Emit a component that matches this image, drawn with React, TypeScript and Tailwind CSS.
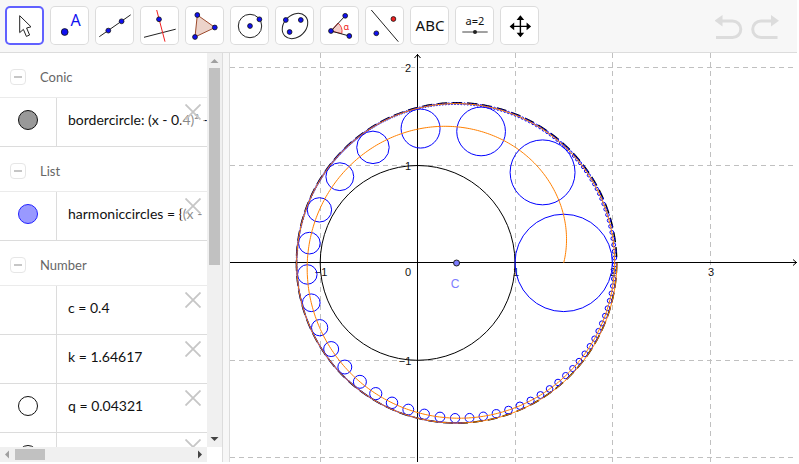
import React from 'react';

interface Circle {
    cx: number;
    cy: number;
    r: number;
}

interface RowProps {
    text: string;
    marble?: 'gray' | 'blue' | 'empty';
}

interface SectionProps {
    title: string;
    children: React.ReactNode;
}

interface ToolProps {
    label: string;
    active?: boolean;
    children: React.ReactNode;
}

const UNIT = 97.4;
const OX = 187.6;
const OY = 209.9;
const C = 0.4;
const K = 1.64617;

const spiralPoint = (theta: number) => {
    const rho = K - (K - 1.5 + C) * Math.exp(-theta / 2);
    return {
        x: OX + UNIT * (C + rho * Math.cos(theta)),
        y: OY - UNIT * rho * Math.sin(theta),
    };
};

// circle n has radius 1/n and sits on the spiral at angle 2 ln(n / 2)
const harmonicCircles: Circle[] = [];
for (let n = 2; n <= 500; n++) {
    const p = spiralPoint(2 * Math.log(n / 2));
    harmonicCircles.push({ cx: p.x, cy: p.y, r: UNIT / n });
}

const spiral = Array.from({ length: 801 }, (_, i) => {
    const p = spiralPoint((i / 800) * 4 * Math.PI);
    return `${p.x.toFixed(2)},${p.y.toFixed(2)}`;
}).join(' ');

const Dot: React.FC<{ x: number; y: number; r?: number; red?: boolean }> = ({ x, y, r = 2.4, red }) => (
    <circle cx={x} cy={y} r={r} fill={red ? '#f02020' : '#1010f0'} stroke="#111" strokeWidth="0.8" />
);

const Tool: React.FC<ToolProps> = ({ label, active, children }) => (
    <button
        type="button"
        aria-label={label}
        className={
            active
                ? 'size-[39px] shrink-0 rounded-[5px] bg-white ring-2 ring-inset ring-[#6161ff]'
                : 'size-[39px] shrink-0 rounded-[5px] bg-white ring-1 ring-inset ring-[#dcdcdc]'
        }
    >
        <svg className="block size-full" viewBox="0 0 39 39" fill="none" stroke="#222" strokeWidth="1">
            {children}
        </svg>
    </button>
);

const Toolbar: React.FC = () => (
    <header className="flex h-[53px] shrink-0 items-start gap-1.5 border-b border-[#dcdcdc] bg-[#f7f7f7] pt-1.5 pr-[18px] pl-[5px]">
        <Tool label="Move" active>
            <path d="M14.7 9.7V26.6L18.4 23.4L21.4 30.4L24.6 29L21.6 22L26 20.8Z" fill="#fff" />
        </Tool>
        <Tool label="Point">
            <Dot x={14.7} y={26} r={3.4} />
            <text x="25.5" y="20" textAnchor="middle" fill="#1010f0" stroke="none" className="font-['Noto_Sans',sans-serif] text-[16px]">A</text>
        </Tool>
        <Tool label="Line">
            <path d="M4.3 30.7L35.7 8.8" />
            <Dot x={13.3} y={24.6} />
            <Dot x={26.6} y={15.3} />
        </Tool>
        <Tool label="Perpendicular Line">
            <path d="M4 31.3L35.7 23.2" />
            <path d="M16.7 4L25 35.7" stroke="#f02020" />
            <Dot x={19} y={13.3} />
        </Tool>
        <Tool label="Polygon">
            <path d="M12.3 9L30 21.5L10 31Z" fill="#ecd3ca" stroke="#9c4a2c" />
            <Dot x={12.3} y={9} />
            <Dot x={29.8} y={21.5} />
            <Dot x={10} y={31} />
        </Tool>
        <Tool label="Circle with Center through Point">
            <circle cx="20" cy="20" r="11.7" />
            <Dot x={20} y={20} />
            <Dot x={29.4} y={13.3} />
        </Tool>
        <Tool label="Ellipse">
            <ellipse cx="20" cy="20" rx="14.2" ry="11" transform="rotate(-44 20 20)" />
            <Dot x={10.8} y={14} />
            <Dot x={25.8} y={14} />
            <Dot x={14.6} y={26} />
        </Tool>
        <Tool label="Angle">
            <path d="M11 25L18 17A11 11 0 0 1 21.8 27.6Z" fill="#f6cfca" stroke="#f04040" />
            <path d="M25.2 9.8L11 25L29.3 30" />
            <Dot x={25.2} y={9.8} />
            <Dot x={11} y={25} />
            <Dot x={29.3} y={30} />
            <text x="26.2" y="23.5" textAnchor="middle" fill="#f02020" stroke="none" className="font-['Noto_Sans',sans-serif] text-[9px]">α</text>
        </Tool>
        <Tool label="Reflect about Line">
            <path d="M6.3 4L33.3 35.7" />
            <Dot x={11.3} y={27.3} />
            <Dot x={28.4} y={13} red />
        </Tool>
        <Tool label="Text">
            <text x="20" y="25" textAnchor="middle" fill="#111" stroke="none" className="font-['Noto_Sans',sans-serif] text-[15px]">ABC</text>
        </Tool>
        <Tool label="Slider">
            <text x="20" y="19" textAnchor="middle" fill="#111" stroke="none" className="font-['Noto_Sans',sans-serif] text-[11px]">a=2</text>
            <path d="M7.3 26H32.7" stroke="#444" />
            <circle cx="20" cy="26" r="2" fill="#222" stroke="none" />
        </Tool>
        <Tool label="Move Graphics View">
            <path d="M20.4 12V29M12 20.4H29" strokeWidth="1.4" stroke="#000" />
            <path d="M20.4 9.3L24.2 14H16.6ZM20.4 31.3L24.2 26.8H16.6ZM9.6 20.4L14.2 16.6V24.2ZM31.1 20.4L26.6 16.6V24.2Z" fill="#000" stroke="none" />
        </Tool>
        <div className="ml-auto flex gap-2 pt-2">
            <button type="button" aria-label="Undo">
                <svg className="block h-[26px] w-7" viewBox="0 0 28 26" fill="none" stroke="#dcdcdc" strokeWidth="3">
                    <path d="M6 7H17.5A8.2 8.2 0 0 1 17.5 23.6H1" />
                    <path d="M-0.5 6.7L7.5 1V12.6Z" fill="#dcdcdc" stroke="none" />
                </svg>
            </button>
            <button type="button" aria-label="Redo">
                <svg className="block h-[26px] w-7" viewBox="0 0 28 26" fill="none" stroke="#dcdcdc" strokeWidth="3">
                    <path d="M21 7H10A8.2 8.2 0 0 0 10 23.6H26.5" />
                    <path d="M28 6.7L20 1V12.6Z" fill="#dcdcdc" stroke="none" />
                </svg>
            </button>
        </div>
    </header>
);

const Section: React.FC<SectionProps> = ({ title, children }) => (
    <section>
        <div className="flex h-[45px] items-center border-b border-[#ebebeb] pt-1 pl-2.5">
            <button
                type="button"
                aria-label={`Collapse ${title}`}
                className="flex size-4 items-center justify-center rounded border border-[#e6e6e6]"
            >
                <span className="h-0.5 w-2 bg-[#c6c6c6]" />
            </button>
            <h2 className="pl-3.5 text-[13px] leading-5 text-[#666]">{title}</h2>
        </div>
        {children}
    </section>
);

const marbles = {
    gray: 'border-[#111] bg-[#999]',
    blue: 'border-[#2222ff] bg-[#9999ff]',
    empty: 'border-[#111] bg-white',
};

const Row: React.FC<RowProps> = ({ text, marble }) => (
    <div className="relative flex h-[49px] border-b border-[#dcdcdc]">
        <div className="flex w-[57px] shrink-0 items-start justify-center border-r border-[#dcdcdc] pt-3">
            {marble && (
                <button
                    type="button"
                    aria-label="Show or hide object"
                    className={`size-5 rounded-full border ${marbles[marble]}`}
                />
            )}
        </div>
        <p className="pt-3 pl-[11px] text-[14px] leading-5 whitespace-nowrap text-[#111]">{text}</p>
        <button type="button" aria-label="Delete" className="absolute top-0 right-0.5 flex h-full w-6 justify-center bg-white/50 pt-1.5">
            <svg className="size-4" viewBox="0 0 16 16" stroke="#c6c6c6" strokeWidth="1.8">
                <path d="M0.5 0.5L15.5 15.5M15.5 0.5L0.5 15.5" />
            </svg>
        </button>
    </div>
);

const AlgebraView: React.FC = () => (
    <aside className="grid w-[222px] shrink-0 grid-cols-[1fr_15px] grid-rows-[minmax(0,1fr)_15px] font-['Lato',sans-serif]">
        <div className="overflow-hidden">
            <Section title="Conic">
                <Row text="bordercircle: (x - 0.4)² -" marble="gray" />
            </Section>
            <Section title="List">
                <Row text="harmoniccircles = {(x -" marble="blue" />
            </Section>
            <Section title="Number">
                <Row text="c = 0.4" />
                <Row text="k = 1.64617" />
                <Row text="q = 0.04321" marble="empty" />
                <Row text="" marble="empty" />
            </Section>
        </div>
        <div className="flex flex-col items-center bg-[#f0f0f0]">
            <svg className="size-[15px] shrink-0" viewBox="0 0 15 15">
                <path d="M7.5 6L11.5 10H3.5Z" fill="#a0a0a0" />
            </svg>
            <div className="h-1/2 w-[11px] bg-[#c1c1c1]" />
            <svg className="mt-auto size-[15px] shrink-0" viewBox="0 0 15 15">
                <path d="M7.5 9L11.5 5H3.5Z" fill="#444" />
            </svg>
        </div>
        <div className="flex items-center bg-[#f0f0f0]">
            <svg className="size-[15px] shrink-0" viewBox="0 0 15 15">
                <path d="M5 7.5L9 3.5V11.5Z" fill="#a0a0a0" />
            </svg>
            <div className="h-[11px] w-[30px] bg-[#c1c1c1]" />
            <svg className="ml-auto size-[15px] shrink-0" viewBox="0 0 15 15">
                <path d="M10 7.5L6 3.5V11.5Z" fill="#444" />
            </svg>
        </div>
    </aside>
);

const GraphicsView: React.FC = () => (
    <main className="min-w-0 flex-1 overflow-hidden">
        <svg className="block size-full font-['Liberation_Sans',sans-serif] text-[11px]" fill="none">
            <g stroke="#c0c0c0" strokeDasharray="5 4">
                {[90.5, 285.5, 382.5, 480.5].map((x) => (
                    <line key={x} x1={x} x2={x} y1="0" y2="100%" />
                ))}
                {[14.5, 112.5, 307.5, 404.5].map((y) => (
                    <line key={y} x1="0" x2="100%" y1={y} y2={y} />
                ))}
            </g>
            <g stroke="#000">
                <line x1="187.5" x2="187.5" y1="1" y2="100%" />
                <line x1="0" x2="100%" y1="209.5" y2="209.5" />
                <path d="M184.5 5L187.5 1.5L190.5 5" />
                <svg x="100%" y="209.5" overflow="visible">
                    <path d="M-4 -3L-0.5 0L-4 3" />
                </svg>
            </g>
            <g fill="#111" stroke="#fff" strokeWidth="2" paintOrder="stroke" textAnchor="middle">
                <text x="178" y="19">2</text>
                <text x="178" y="117">1</text>
                <text x="175" y="312">−1</text>
                <text x="178" y="223">0</text>
                <text x="91" y="223">−1</text>
                <text x="286" y="223">1</text>
                <text x="383" y="223">2</text>
                <text x="481" y="223">3</text>
            </g>
            <circle cx={OX} cy={OY} r={UNIT} stroke="#000" />
            <circle cx={OX + C * UNIT} cy={OY} r={K * UNIT - 0.2} stroke="#000" strokeWidth="1.5" strokeDasharray="10 5" />
            <g stroke="#0000ff">
                {harmonicCircles.map((c, i) => (
                    <circle key={i} cx={c.cx} cy={c.cy} r={c.r} />
                ))}
            </g>
            <polyline points={spiral} stroke="#ff7f00" />
            <circle cx={OX + C * UNIT} cy="210" r="3" fill="#7d7dff" stroke="#222" />
            <text x="225" y="235" textAnchor="middle" fill="#7d7dff" className="text-[12px]">C</text>
        </svg>
    </main>
);

const App: React.FC = () => {
    return (
        <div className="flex h-screen flex-col bg-white pr-0.5 pb-0.5">
            <Toolbar />
            <div className="flex min-h-0 flex-1">
                <AlgebraView />
                <div className="w-2 shrink-0 border-x border-[#dcdcdc] bg-[#f7f7f7]" />
                <GraphicsView />
            </div>
        </div>
    );
};

export default App;
